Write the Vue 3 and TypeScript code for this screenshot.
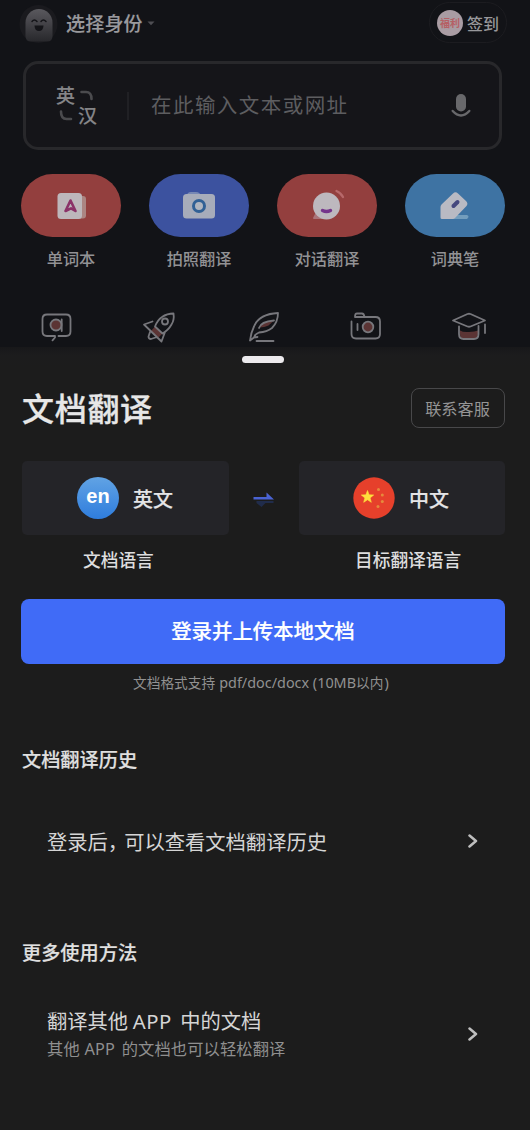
<script setup lang="ts">
interface Feature { key: string; label: string }

const features: Feature[] = [
  { key: 'words', label: '单词本' },
  { key: 'photo', label: '拍照翻译' },
  { key: 'talk', label: '对话翻译' },
  { key: 'pen', label: '词典笔' },
]
</script>

<template>
  <main class="screen">
    <section class="home">
      <header class="topbar">
        <div class="identity">
          <svg class="avatar" viewBox="0 0 40 40">
            <defs>
              <linearGradient id="ghost" x1="0" y1="0" x2="0" y2="1">
                <stop offset="0" stop-color="#5a595e" />
                <stop offset="1" stop-color="#28282c" />
              </linearGradient>
            </defs>
            <circle cx="20.500" cy="20" r="19" fill="#1a1a1e" />
            <path d="M7.500 18.500a13.500 13.500 0 0 1 27 0V32q0 5.500-5.500 5.500H13q-5.500 0-5.500-5.500z" fill="url(#ghost)" />
            <path d="M14 17.500q2.300-3 5 0M23 17.500q2.300-3 5 0" fill="none" stroke="#141418" stroke-width="1.500" stroke-linecap="round" />
            <path d="M16.500 21.500h9q-.3 5.500-4.500 5.500t-4.500-5.500z" fill="#141418" />
          </svg>
          <span class="identity-name">选择身份</span>
          <svg class="caret" viewBox="0 0 8 5"><path d="M.5.500h7L4 4.200z" fill="#4e4e53" /></svg>
        </div>
        <div class="checkin">
          <span class="gift">福利</span>
          <span class="checkin-text">签到</span>
        </div>
      </header>

      <div class="search">
        <div class="pair">
          <span class="from">英</span>
          <svg class="arc arc-top" viewBox="0 0 14 11"><path d="M1.500 2H6q5.500 0 5.500 7" /></svg>
          <svg class="arc arc-bottom" viewBox="0 0 14 11"><path d="M2 1.500q0 7.500 5.500 7.500H12" /></svg>
          <span class="to">汉</span>
        </div>
        <i class="divider"></i>
        <span class="placeholder">在此输入文本或网址</span>
        <svg class="mic" viewBox="0 0 20 26">
          <rect x="5" y="1" width="10" height="17.500" rx="5" fill="#68686b" />
          <path d="M1.700 18q8.300 9 16.600 0" fill="none" stroke="#68686b" stroke-width="2.400" stroke-linecap="round" />
        </svg>
      </div>

      <nav class="features">
        <div v-for="f in features" :key="f.key" class="feature">
          <div class="pill" :class="f.key">
            <svg v-if="f.key === 'words'" viewBox="0 0 40 40">
              <rect x="15" y="10" width="20" height="22.500" rx="3" fill="#ab8582" />
              <rect x="6.500" y="7" width="24.500" height="26" rx="3.500" fill="#bdb7bb" />
              <path d="M14.500 25l5-10.500 5 10.500-4.500-2.700z" fill="none" stroke="#8b3268" stroke-width="2.600" stroke-linejoin="round" stroke-linecap="round" />
            </svg>
            <svg v-else-if="f.key === 'photo'" viewBox="0 0 40 40">
              <path d="M8 10q0-4 4-4h5q4 0 5 4v3H8z" fill="#7788b4" />
              <rect x="4" y="8" width="32" height="24.500" rx="3.500" fill="#a7acba" />
              <circle cx="20" cy="20" r="5.500" fill="#b0b5bf" stroke="#316095" stroke-width="3" />
            </svg>
            <svg v-else-if="f.key === 'talk'" viewBox="0 0 40 40">
              <path d="M6.500 33q-1-1 0-2l4-8 10 10z" fill="#aa7479" />
              <circle cx="19.500" cy="20" r="13.500" fill="#bdb8be" />
              <path d="M15.500 24.500q4 2 8 0" fill="none" stroke="#75358b" stroke-width="3.400" stroke-linecap="round" />
              <path d="M29.500 5q4.500 2 6.500 6" fill="none" stroke="#b7686a" stroke-width="2.300" stroke-linecap="round" />
            </svg>
            <svg v-else viewBox="0 0 40 40">
              <path d="M7 33l15-4h10q3 1 0 4z" fill="#739dbd" />
              <path d="M5.500 31.500V21q0-1.500 1-2.500L18 7.500q2.500-2.500 5 0l8 7.500q2.500 2.500 .5 5L20.500 31.500q-1.500 1.500-3 1.500H7q-1.500 0-1.500-1.500z" fill="#b9bac3" />
              <path d="M18.500 20l4-4" stroke="#45487e" stroke-width="4" stroke-linecap="round" />
            </svg>
          </div>
          <span class="feature-label">{{ f.label }}</span>
        </div>
      </nav>

      <div class="tools">
        <svg viewBox="0 0 36 36">
          <circle cx="18" cy="17" r="5.500" fill="#5b3434" />
          <path d="M11 28H9q-4.500 0-4.500-4.500V11q0-4.500 4.500-4.500h19q4.500 0 4.500 4.500v12.500q0 4.500-4.500 4.500h-7.500M10.500 28h6.500v1.500l-2.500 2.800M23.700 11.500v11.500" />
        </svg>
        <svg viewBox="0 0 36 36">
          <path d="M14 18.500l7.500 7-4 4-7.500-6.500z" fill="#5b3434" stroke="none" />
          <path d="M14 18.500q2.500-6.500 7-9.500 5-3.500 11.500-3.500 1 6.500-2 11-3 5.500-9 9zM11.500 13.500l-8.500 3 17.500 17 3.500-9.500M9.500 22.500l-2 6q0 2.500 2.500 2.500l6-2" />
          <circle cx="24" cy="13.500" r="3" />
        </svg>
        <svg viewBox="0 0 36 36">
          <path d="M14.500 19.500q1-6 14-6.500l-5 4.500q-4 2-9 2z" fill="#5b3434" stroke="none" />
          <path d="M5 32.500q1-8 4-14Q14 6 33 5q0 9-6 15-5 4-13 4.500-4 1.500-5 5l3.500-.5M5 32.500l4-3M14 20q2-6.500 15-7.500M11.500 33h17" />
        </svg>
        <svg viewBox="0 0 36 36">
          <circle cx="20" cy="19" r="5.300" fill="#5b3434" />
          <path d="M3.500 13.500v12.500q0 4.500 4.500 4.500h19.500q4.500 0 4.500-4.500V13.500q0-4.500-4.500-4.500H7q0-3.500 2-3.500h5q2 0 2.500 3.500M9.500 16v6" />
        </svg>
        <svg viewBox="0 0 36 36">
          <path d="M9 22.500q3 2 9 1.500t9-1.500v3.500q-1 5-4 5H13q-4 0-4-5z" fill="#5b3434" stroke="none" />
          <path d="M2 12.500l14.500-6.500q1.500-.5 3 0L34 12.500 19.500 18.500q-1.500.5-3 0zM8 18.500v7.500q0 5 4.500 5h10.500q4.500 0 4.500-5V18M34 16.500V25" />
        </svg>
      </div>
    </section>

    <section class="sheet">
      <i class="handle"></i>
      <div class="title-row">
        <h1>文档翻译</h1>
        <button class="contact">联系客服</button>
      </div>

      <div class="languages">
        <div class="language">
          <div class="language-card">
            <span class="badge-en">en</span>
            <span class="language-name">英文</span>
          </div>
          <span class="language-role source">文档语言</span>
        </div>
        <svg class="swap" viewBox="0 0 22 20">
          <path d="M3.500 12h17v2H12.500L8.500 18l-5-4z" fill="#202c4b" />
          <path d="M.5 8h13V3.500L21 10.600H.5z" fill="#4a63d3" />
        </svg>
        <div class="language">
          <div class="language-card">
            <svg class="flag" viewBox="0 0 42 42">
              <circle cx="21" cy="21" r="20.700" fill="#e6402b" />
              <path d="M14.500 13.500l1.600 4.300 4.600.2-3.600 2.900 1.200 4.400-3.800-2.500-3.800 2.500 1.200-4.400-3.600-2.900 4.600-.2z" fill="#ffe03c" stroke="#ffe03c" stroke-width=".6" />
              <g fill="#e68a3c"><circle cx="25.500" cy="12.500" r="1.500" /><circle cx="29.300" cy="18" r="1.500" /><circle cx="29.300" cy="24.500" r="1.500" /><circle cx="25" cy="29.500" r="1.500" /></g>
            </svg>
            <span class="language-name">中文</span>
          </div>
          <span class="language-role target">目标翻译语言</span>
        </div>
      </div>

      <button class="upload">登录并上传本地文档</button>
      <p class="formats">文档格式支持 <span class="latin">pdf/doc/docx (10MB</span>以内<span class="latin close">)</span></p>

      <h2>文档翻译历史</h2>
      <div class="row history">
        <span class="row-title">登录后<span class="comma">，</span>可以查看文档翻译历史</span>
        <svg class="chevron" viewBox="0 0 10 14"><path d="M1.500 1.500L8 7l-6.500 5.500" /></svg>
      </div>

      <h2>更多使用方法</h2>
      <div class="row more">
        <div class="row-text">
          <span class="row-title">翻译其他 <span class="latin app">APP</span> 中的文档</span>
          <span class="row-sub">其他 <span class="latin app">APP</span> 的文档也可以轻松翻译</span>
        </div>
        <svg class="chevron" viewBox="0 0 10 14"><path d="M1.500 1.500L8 7l-6.500 5.500" /></svg>
      </div>
    </section>
  </main>
</template>

<style>
body { background: #1c1c1c; }
</style>

<style scoped>
* { box-sizing: border-box; }
svg { display: block; flex: none; }
h1, h2, p { margin: 0; }
button { padding: 0; border: 0; background: none; font-family: inherit; }
.screen {
  width: 530px; height: 1130px; overflow: hidden; background: #1c1c1c;
  font-family: "Noto Sans CJK SC", sans-serif; white-space: nowrap;
}
.latin { font-family: "Noto Sans", sans-serif; }

.home { height: 347px; background: #121317; overflow: hidden; }
.topbar { height: 61px; display: flex; justify-content: space-between; align-items: flex-start; padding: 4px 23px 0 18px; }
.identity { display: flex; align-items: center; height: 40px; }
.avatar { width: 40px; height: 40px; }
.identity-name { margin: -2px 0 0 8px; font-size: 19px; line-height: 28px; font-weight: 500; letter-spacing: .2px; color: #99999d; -webkit-text-stroke: .15px #99999d; }
.caret { width: 8px; height: 5px; margin: -1px 0 0 4px; }
.checkin { display: flex; align-items: center; width: 78px; height: 41px; margin-top: -2px; padding-left: 7px; border: 1px solid #1c1c20; border-radius: 21px; }
.gift { width: 26px; height: 26px; border-radius: 50%; background: #a99ca3; color: #b66065; font-size: 10px; line-height: 25px; font-weight: 700; text-align: center; }
.checkin-text { margin: 0 0 0 4px; font-size: 16px; line-height: 24px; font-weight: 500; color: #98989b; }

.search { display: flex; align-items: center; width: 479px; height: 89px; margin-left: 23px; padding-left: 30px; padding-right: 28px; border: 3px solid #28282b; border-radius: 15px; background: #151519; }
.pair { display: grid; grid-template-columns: 22px 20px; grid-template-rows: 20px 20px; width: 42px; margin-top: -2px; align-items: center; font-size: 19px; line-height: 20px; font-weight: 500; color: #858588; -webkit-text-stroke: .15px #858588; }
.arc { width: 14px; height: 11px; fill: none; stroke: #4b4b4e; stroke-width: 2.600; stroke-linecap: round; }
.arc-top { margin: 2px 0 0 2px; }
.arc-bottom { margin: 2px 0 0 3px; }
.divider { width: 2px; height: 28px; margin-left: 29px; background: #202024; }
.placeholder { margin: -3px 0 0 22px; font-size: 20.500px; line-height: 30px; letter-spacing: 1.450px; color: #5d5d60; }
.mic { width: 20px; height: 26px; margin-left: auto; }

.features { display: flex; gap: 28px; padding: 24px 0 0 21px; }
.feature { width: 100px; display: flex; flex-direction: column; align-items: center; }
.pill { width: 100px; height: 63px; border-radius: 32px; display: flex; align-items: center; justify-content: center; }
.pill svg { width: 40px; height: 40px; }
.pill.words, .pill.talk { background: #933f3e; }
.pill.photo { background: #3c529f; }
.pill.pen { background: #3e73a3; }
.feature-label { margin: 9px 0 2px; font-size: 16.200px; line-height: 24px; font-weight: 500; color: #929295; }

.tools { display: flex; justify-content: space-between; width: 449px; margin: 36px 0 0 38px; }
.tools svg { width: 36px; height: 36px; fill: none; stroke: #77777c; stroke-width: 1.800; stroke-linecap: round; stroke-linejoin: round; }

.sheet { height: 783px; padding: 9px 25px 0 22px; background: linear-gradient(#18181a, #1c1c1d 8px, #1c1c1c 20px); }
.handle { display: block; width: 42px; height: 7px; margin-left: 220px; border-radius: 4px; background: #eceaed; }
.title-row { display: flex; align-items: center; justify-content: space-between; height: 40px; margin-top: 25px; }
h1 { margin-top: -2px; font-size: 32px; line-height: 42px; font-weight: 500; letter-spacing: .7px; color: #e7e7e7; -webkit-text-stroke: .3px #e7e7e7; }
.contact { width: 94px; height: 40px; padding-right: 1px; border: 1px solid #48484a; border-radius: 8px; font-size: 16.200px; line-height: 36px; color: #959595; }

.languages { display: flex; align-items: flex-start; justify-content: space-between; margin-top: 33px; }
.language { width: 207px; }
.swap + .language { width: 206px; }
.language-card { display: flex; align-items: center; height: 74px; padding-left: 55px; border-radius: 5px; background: #242428; }
.swap + .language .language-card { padding-left: 54px; }
.badge-en { width: 42px; height: 42px; border-radius: 50%; background: linear-gradient(#61a3e4, #2f7ddd); color: #fff; font: 700 20px/39px "Liberation Sans", sans-serif; text-align: center; }
.flag { width: 42px; height: 42px; }
.language-name { margin: 2px 0 0 14px; font-size: 20px; line-height: 30px; font-weight: 500; color: #e4e4e6; -webkit-text-stroke: .15px #e4e4e6; }
.language-role { display: block; margin: 11px 0 1px; font-size: 17.700px; line-height: 26px; font-weight: 500; color: #dededf; }
.source { padding-left: 61px; }
.target { padding-left: 56px; }
.swap { width: 22px; height: 20px; margin-top: 28px; }

.upload { display: block; width: 484px; height: 65px; margin: 26px 0 0 -1px; border-radius: 8px; background: #406bf7; color: #fff; font-size: 20.400px; line-height: 63px; padding-bottom: 2px; font-weight: 500; text-align: center; -webkit-text-stroke: .2px #fff; }
.formats { height: 22px; margin-top: 7px; padding-left: 111px; font-size: 13.700px; line-height: 22px; color: #919191; }
.formats .latin { margin-left: 1px; font-size: 14.400px; }
.formats .close { margin-left: 1px; }
h2 { height: 28px; margin-top: 52px; font-size: 19.200px; line-height: 28px; font-weight: 500; color: #e0e0e0; -webkit-text-stroke: .15px #e0e0e0; }
.row { display: flex; align-items: center; justify-content: space-between; padding: 0 27px 0 25px; }
.history { height: 104px; margin-top: 16px; }
.history + h2 { margin-top: 45px; }
.row-title { font-size: 20.300px; line-height: 30px; color: #d5d5d5; }
.comma { letter-spacing: -4px; }
.row-text { display: flex; flex-direction: column; }
.more { margin-top: 39px; }
.row-title .app { margin-right: 4px; letter-spacing: .5px; }
.row-sub { font-size: 16.300px; line-height: 25px; letter-spacing: .1px; color: #8f8f8f; }
.row-sub .app { margin: 0 3px 0 1px; }
.chevron { width: 10px; height: 14px; fill: none; stroke: #bebebe; stroke-width: 2.500; stroke-linecap: round; stroke-linejoin: round; }
</style>
